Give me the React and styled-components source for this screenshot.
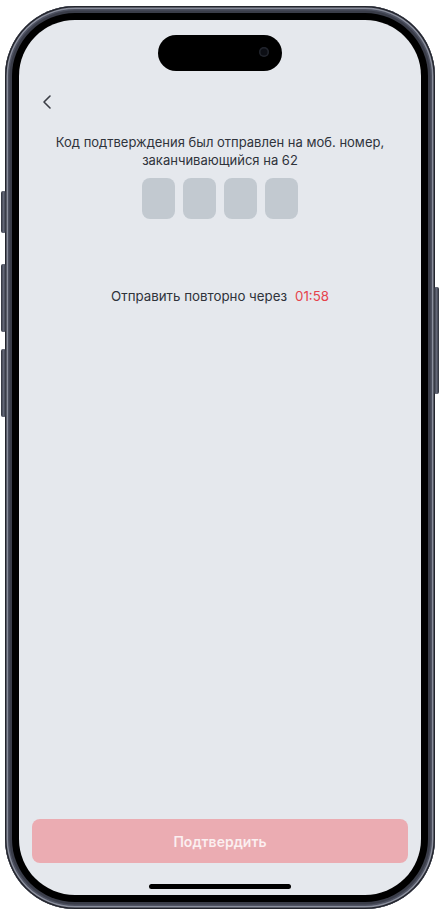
import React from 'react';
import styled, { createGlobalStyle } from 'styled-components';

const Global = createGlobalStyle`
  html, body { margin: 0; padding: 0; background: #ffffff; }
  body { font-family: Inter, "Noto Sans", sans-serif; -webkit-font-smoothing: antialiased; }
  * { box-sizing: border-box; }
`;

const Stage = styled.div`
  width: 440px;
  height: 916px;
  padding: 6px 5px 0;
`;

const Frame = styled.div`
  position: relative;
  width: 430px;
  height: 903px;
  padding: 7px;
  border-radius: 70px;
  background: #3a3d49;
  box-shadow: inset 0 0 0 1.5px #24262e, inset 0 0 0 3px #8a8e9c, inset 0 0 0 4.5px #4d5160;
`;

const SideButton = styled.div`
  position: absolute;
  top: ${p => p.$top}px;
  height: ${p => p.$height}px;
  ${p => (p.$side === 'right' ? 'right: -4px;' : 'left: -4px;')}
  width: 5px;
  border-radius: 2px;
  background: linear-gradient(90deg, #2e313b, #626676 50%, #2e313b);
`;

const Bezel = styled.div`
  height: 100%;
  padding: 7px;
  border-radius: 63px;
  background: #000;
`;

const Screen = styled.div`
  position: relative;
  height: 100%;
  border-radius: 56px;
  background: #e5e8ed;
  overflow: hidden;
  display: flex;
  flex-direction: column;
  padding: 0 13px;
`;

const Island = styled.div`
  position: absolute;
  top: 15px;
  left: 50%;
  transform: translateX(-50%);
  width: 124px;
  height: 36px;
  border-radius: 18px;
  background: #000;
`;

const Camera = styled.div`
  position: absolute;
  right: 13px;
  top: 12px;
  width: 10px;
  height: 10px;
  border-radius: 50%;
  background: #0c0e14;
  box-shadow: inset 0 0 0 1.5px #22252d;
`;

const Header = styled.div`
  margin-top: 70px;
  padding-left: 3px;
  display: flex;
  align-items: center;
  height: 24px;
`;

const BackButton = styled.button`
  width: 24px;
  height: 24px;
  padding: 0;
  border: 0;
  background: transparent;
  color: #3a3d45;
  display: flex;
  align-items: center;
  justify-content: center;
`;

const Message = styled.p`
  margin: 19px 0 0;
  text-align: center;
  font-size: 13px;
  line-height: 18px;
  color: #2f333b;
`;

const CodeRow = styled.div`
  margin-top: 9px;
  display: flex;
  justify-content: center;
  gap: 8px;
`;

const CodeCell = styled.div`
  width: 33px;
  height: 41px;
  border-radius: 8px;
  background: #c2c9d0;
`;

const Resend = styled.div`
  margin-top: 68px;
  text-align: center;
  font-size: 13.3px;
  line-height: 18px;
  color: #2f333b;
`;

const Timer = styled.span`
  margin-left: 8px;
  color: #e5434b;
`;

const Spacer = styled.div`
  flex: 1;
`;

const ConfirmButton = styled.button`
  height: 44px;
  width: 100%;
  border: 0;
  border-radius: 8px;
  background: #ebacb2;
  color: rgba(255, 255, 255, 0.82);
  font-family: Inter, "Noto Sans", sans-serif;
  font-size: 14px;
  font-weight: 600;
`;

const HomeIndicator = styled.div`
  margin: 21px auto 6px;
  width: 142px;
  height: 5px;
  border-radius: 3px;
  background: #000;
`;

export default function App() {
  return (
    <>
      <Global />
      <Stage>
        <Frame>
          <SideButton $top={185} $height={42} />
          <SideButton $top={258} $height={68} />
          <SideButton $top={343} $height={68} />
          <SideButton $side="right" $top={281} $height={107} />
          <Bezel>
            <Screen>
              <Island>
                <Camera />
              </Island>
              <Header>
                <BackButton aria-label="Назад">
                  <svg width="24" height="24" viewBox="0 0 24 24" fill="none" stroke="currentColor" strokeWidth="1.6" strokeLinecap="round" strokeLinejoin="round">
                    <polyline points="15 6 9 12 15 18" />
                  </svg>
                </BackButton>
              </Header>
              <Message>
                Код подтверждения был отправлен на моб. номер,
                <br />
                заканчивающийся на 62
              </Message>
              <CodeRow>
                <CodeCell />
                <CodeCell />
                <CodeCell />
                <CodeCell />
              </CodeRow>
              <Resend>
                Отправить повторно через<Timer>01:58</Timer>
              </Resend>
              <Spacer />
              <ConfirmButton>Подтвердить</ConfirmButton>
              <HomeIndicator />
            </Screen>
          </Bezel>
        </Frame>
      </Stage>
    </>
  );
}
